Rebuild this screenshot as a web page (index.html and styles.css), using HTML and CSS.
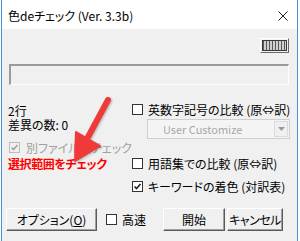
FILE: index.html
```html
<!DOCTYPE html>
<html lang="ja">
<head>
  <meta charset="UTF-8" />
  <title>色deチェック</title>
  <link rel="stylesheet" href="styles.css">
</head>
<body>

  <div class="window">
    <!-- Title bar -->
    <div class="titlebar">
      <span class="title">色deチェック (Ver. 3.3b)</span>
      <svg class="close" width="10" height="10" viewBox="0 0 10 10">
        <path d="M0.5 0.5 L9.5 9.5 M9.5 0.5 L0.5 9.5" stroke="#222" stroke-width="1" fill="none"/>
      </svg>
    </div>

    <div class="client">
      <div class="toolrow">
        <button class="tool-btn"><span class="ruler"></span></button>
      </div>

      <div class="field"></div>

      <div class="middle">
        <div class="left">
          <div class="line first">2行</div>
          <div class="line">差異の数: 0</div>
          <label class="check disabled">
            <span class="box">
              <svg width="9" height="9" viewBox="0 0 9 9"><path d="M1.5 4.5 L3.5 6.5 L7.5 2" stroke="#a0a0a0" stroke-width="1.6" fill="none"/></svg>
            </span>
            別ファイルもチェック
          </label>
          <div class="line red">選択範囲をチェック</div>
        </div>

        <div class="right">
          <label class="check first"><span class="box"></span>英数字記号の比較 (原⇔訳)</label>
          <div class="combo">
            <span class="combo-text">User Customize</span>
            <span class="drop"><svg width="7" height="4" viewBox="0 0 7 4"><path d="M0 0 H7 L3.5 4 Z" fill="#9a9a9a"/></svg></span>
          </div>
          <label class="check glossary"><span class="box"></span>用語集での比較 (原⇔訳)</label>
          <label class="check keyword">
            <span class="box">
              <svg width="9" height="9" viewBox="0 0 9 9"><path d="M1.5 4.5 L3.5 6.5 L7.5 2" stroke="#222" stroke-width="1.6" fill="none"/></svg>
            </span>
            キーワードの着色 (対訳表)
          </label>
        </div>
      </div>

      <div class="bottom">
        <button class="btn option">オプション(<u>O</u>)</button>
        <label class="check fast"><span class="box"></span>高速</label>
        <button class="btn start">開始</button>
        <button class="btn cancel">キャンセル</button>
      </div>
    </div>

    <!-- red pointer drawn over the dialog -->
    <svg class="arrow" width="297" height="241" viewBox="0 0 297 241">
      <path d="M108 100 L88 137" stroke="#f03a3a" stroke-width="6" stroke-linecap="round" fill="none"/>
      <path d="M75 161 L76 132 L100 146 Z" fill="#f03a3a" stroke="#f03a3a" stroke-width="2" stroke-linejoin="round"/>
    </svg>
  </div>

</body>
</html>
```

FILE: styles.css
```css
* {
  box-sizing: border-box;
}

body {
  margin: 0;
  background: #fff;
  font-family: "Noto Sans CJK JP", "Noto Sans", sans-serif;
  font-size: 12px;
  color: #000;
  font-feature-settings: "palt";
}

.window {
  position: relative;
  width: 297px;
  height: 241px;
  margin-left: 1px;
  border-left: 1px solid #4a90d9;
  border-right: 1px solid #4a90d9;
  display: flex;
  flex-direction: column;
}

.titlebar {
  height: 29px;
  background: #fff;
  display: flex;
  align-items: center;
  justify-content: space-between;
  padding: 2px 9px 0 6px;
}

.title {
  font-size: 12px;
}

.client {
  flex: 1;
  background: #f0f0f0;
  padding: 0 8px 0 6px;
}

.toolrow {
  display: flex;
  justify-content: flex-end;
  margin-top: 9px;
  height: 15px;
}

.tool-btn {
  width: 29px;
  height: 15px;
  padding: 1px;
  display: flex;
  background: #f0f0f0;
  border: 1px solid;
  border-color: #fff #696969 #696969 #fff;
}

.ruler {
  flex: 1;
  border: 1px solid #3a3a3a;
  background: repeating-linear-gradient(90deg, #5a5a5a 0 1px, #cfcfcf 1px 3px);
}

.field {
  height: 21px;
  margin: 11px 0 0 1px;
  border-style: solid;
  border-width: 2px 1px 1px 2px;
  border-color: #9a9a9a #fff #fff #9a9a9a;
  background: #f0f0f0;
}

.middle {
  height: 123px;
  display: flex;
}

.left {
  width: 124px;
  display: flex;
  flex-direction: column;
  padding-top: 19px;
}

.right {
  flex: 1;
  display: flex;
  flex-direction: column;
  padding-top: 17px;
}

.line {
  height: 14px;
  line-height: 14px;
  white-space: nowrap;
}

.red {
  margin-top: 3px;
  color: #f00;
  font-weight: bold;
  letter-spacing: -0.4px;
}

.check {
  display: flex;
  align-items: center;
  height: 14px;
  white-space: nowrap;
}

.box {
  width: 11px;
  height: 11px;
  margin-right: 5px;
  border: 1px solid #333;
  background: #fff;
  display: flex;
  align-items: center;
  justify-content: center;
  flex: none;
}

.disabled {
  margin-top: 8px;
  color: #a0a0a0;
}

.disabled .box {
  margin-left: 1px;
  margin-right: 6px;
  border-color: #bcbcbc;
  background: #f0f0f0;
}

.combo {
  height: 20px;
  margin: 3px 0 0 15px;
  border: 1px solid #cfcfcf;
  background: #f4f4f4;
  display: flex;
  align-items: center;
  justify-content: space-between;
  padding: 0 1px 0 15px;
}

.combo-text {
  color: #a8a8a8;
  font-size: 11px;
}

.drop {
  width: 14px;
  height: 16px;
  border: 1px solid #dadada;
  background: #f0f0f0;
  display: flex;
  align-items: center;
  justify-content: center;
}

.glossary {
  margin-top: 17px;
}

.keyword {
  margin-top: 9px;
}

.bottom {
  display: flex;
  align-items: center;
  height: 23px;
  padding-right: 6px;
}

.btn {
  height: 23px;
  padding: 0;
  white-space: nowrap;
  font-family: inherit;
  font-size: 12px;
  font-feature-settings: "palt";
  background: #f0f0f0;
  border: 1px solid;
  border-color: #fff #5a5a5a #5a5a5a #fff;
  box-shadow: inset -1px -1px #a0a0a0;
  color: #000;
}

.option {
  width: 91px;
  margin-left: -2px;
}

.fast {
  margin-left: 9px;
}

.start {
  width: 62px;
  margin-left: auto;
}

.cancel {
  width: 56px;
  margin-left: 2px;
  letter-spacing: -0.5px;
}

.arrow {
  position: absolute;
  left: -2px;
  top: 0;
  pointer-events: none;
  filter: drop-shadow(1px 1px 1px rgba(0, 0, 0, 0.25));
}
```
